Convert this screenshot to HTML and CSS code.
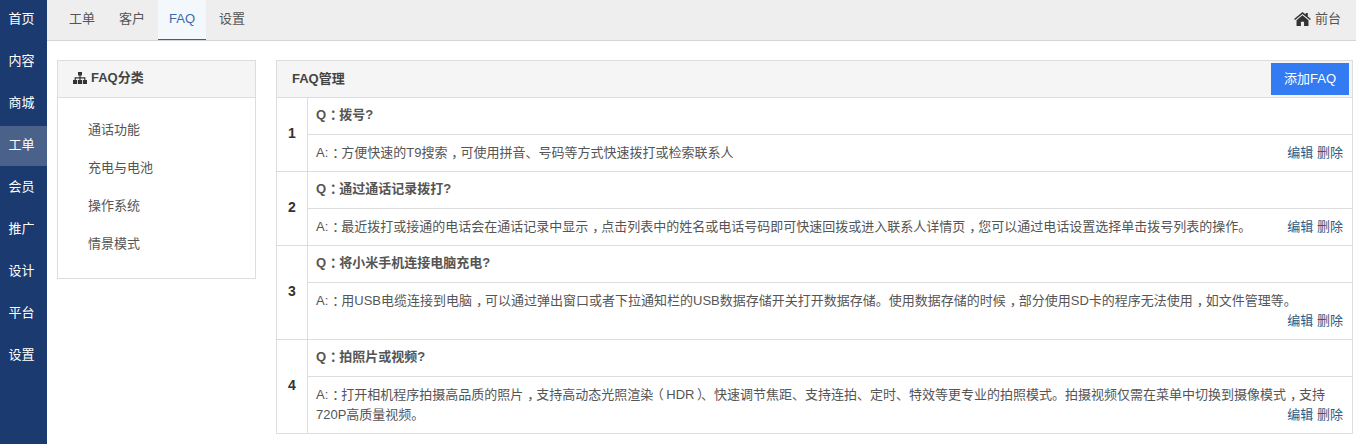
FILE: index.html
```html
<!DOCTYPE html>
<html lang="zh-CN">
<head>
<meta charset="utf-8">
<title>FAQ管理</title>
<link rel="stylesheet" href="styles.css">
</head>
<body>
<div class="app">
  <nav class="side">
    <a class="side-item">首页</a>
    <a class="side-item">内容</a>
    <a class="side-item">商城</a>
    <a class="side-item active">工单</a>
    <a class="side-item">会员</a>
    <a class="side-item">推广</a>
    <a class="side-item">设计</a>
    <a class="side-item">平台</a>
    <a class="side-item">设置</a>
  </nav>
  <div class="main">
    <header class="top">
      <div class="tabs">
        <a class="tab">工单</a>
        <a class="tab">客户</a>
        <a class="tab current">FAQ</a>
        <a class="tab">设置</a>
      </div>
      <a class="front">
        <svg class="home" viewBox="0 0 18 15" width="17" height="14"><path d="M9 0 L12.4 2.8 V1 H14.7 V4.7 L18 7.5 L17 8.7 L9 2.1 L1 8.7 L0 7.5 Z M2.6 8.8 L9 3.5 L15.4 8.8 V15 H10.7 V10.4 H7.3 V15 H2.6 Z" fill="#333"/></svg>
        前台
      </a>
    </header>
    <div class="content">
      <aside class="panel cats">
        <div class="panel-head cats-head">
          <svg class="tree" viewBox="0 0 14 12" width="14" height="12"><path d="M5 0 H9 V3.4 H7.6 V5.2 H12.4 V8 H14 V12 H9.8 V8 H11.2 V6.4 H7.6 V8 H9 V12 H5 V8 H6.4 V6.4 H2.8 V8 H4.2 V12 H0 V8 H1.6 V5.2 H6.4 V3.4 H5 Z" fill="#333"/></svg>
          <span>FAQ分类</span>
        </div>
        <ul class="cat-list">
          <li>通话功能</li>
          <li>充电与电池</li>
          <li>操作系统</li>
          <li>情景模式</li>
        </ul>
      </aside>
      <section class="panel faq">
        <div class="panel-head faq-head">
          <span>FAQ管理</span>
          <button class="add">添加FAQ</button>
        </div>
        <div class="row">
          <div class="num">1</div>
          <div class="qa">
            <div class="q">Q<span class="p">：</span>拨号?</div>
            <div class="a">A:<span class="p">：</span>方便快速的T9搜索<span class="p">，</span>可使用拼音、号码等方式快速拨打或检索联系人<span class="ops"><a>编辑</a> <a>删除</a></span></div>
          </div>
        </div>
        <div class="row">
          <div class="num">2</div>
          <div class="qa">
            <div class="q">Q<span class="p">：</span>通过通话记录拨打?</div>
            <div class="a">A:<span class="p">：</span>最近拨打或接通的电话会在通话记录中显示<span class="p">，</span>点击列表中的姓名或电话号码即可快速回拨或进入联系人详情页<span class="p">，</span>您可以通过电话设置选择单击拨号列表的操作。<span class="ops"><a>编辑</a> <a>删除</a></span></div>
          </div>
        </div>
        <div class="row">
          <div class="num">3</div>
          <div class="qa">
            <div class="q">Q<span class="p">：</span>将小米手机连接电脑充电?</div>
            <div class="a">A:<span class="p">：</span>用USB电缆连接到电脑<span class="p">，</span>可以通过弹出窗口或者下拉通知栏的USB数据存储开关打开数据存储。使用数据存储的时候<span class="p">，</span>部分使用SD卡的程序无法使用<span class="p">，</span>如文件管理等。<span class="ops"><a>编辑</a> <a>删除</a></span></div>
          </div>
        </div>
        <div class="row">
          <div class="num">4</div>
          <div class="qa">
            <div class="q">Q<span class="p">：</span>拍照片或视频?</div>
            <div class="a">A:<span class="p">：</span>打开相机程序拍摄高品质的照片<span class="p">，</span>支持高动态光照渲<span class="tight">染</span><span class="po">（</span>HDR<span class="pc">）</span>、快速调节焦距、支持连拍、定时、特效等更专业的拍照模式。拍摄视频仅需在菜单中切换到摄像模式<span class="p">，</span>支持<span class="line">720P高质量视频。</span><span class="ops"><a>编辑</a> <a>删除</a></span></div>
          </div>
        </div>
      </section>
    </div>
  </div>
</div>
</body>
</html>
```
FILE: styles.css
```css
* { box-sizing: border-box; }
html, body { margin: 0; padding: 0; height: 100%; background: #fff; overflow: hidden; }
body { font: 13px/20px "Liberation Sans", "Noto Sans CJK SC", sans-serif; color: #555; }
.app { display: flex; height: 444px; }
.side { width: 47px; flex: none; background: #1b3a6f; }
.side-item { display: block; height: 42px; line-height: 38px; padding-right: 4px; text-align: center; color: #fff; }
.side-item.active { height: 40px; margin-bottom: 2px; background: #4a6189; }
.main { flex: 1; min-width: 0; }
.top { height: 41px; display: flex; justify-content: space-between; background: #eee; border-bottom: 1px solid #d5d5d5; padding: 0 15px 0 10px; }
.tabs { display: flex; }
.tab { height: 40px; line-height: 38px; padding: 0 12px; color: #555; }
.tab.current { width: 48px; padding: 0; margin: 0 1px; text-align: center; background: #f3f8fd; color: #3d6aa8; border-bottom: 1px solid #2f63a0; }
.front { display: flex; align-items: center; gap: 4px; padding-bottom: 2px; color: #555; }
.home { flex: none; }
.content { display: flex; align-items: flex-start; gap: 20px; padding: 19px 3px 0 10px; }
.panel { border: 1px solid #ddd; background: #fff; }
.cats { width: 199px; flex: none; height: 219px; }
.faq { flex: 1; min-width: 0; }
.panel-head { height: 37px; display: flex; align-items: center; background: #f5f5f5; font-weight: bold; color: #444; border-bottom: 1px solid #ddd; padding-left: 15px; gap: 4px; }
.cats-head { padding-bottom: 2px; }
.faq-head { justify-content: space-between; padding: 0 3px 0 15px; }
.add { width: 78px; height: 32px; border: 0; border-radius: 0; background: #337bf2; color: #fff; font: inherit; font-weight: normal; font-size: 13px; padding: 0; }
.cat-list { list-style: none; margin: 0; padding: 13px 0 0 30px; }
.cat-list li { height: 38px; line-height: 38px; }
.row { display: flex; border-bottom: 1px solid #ddd; }
.row:last-child { border-bottom: 0; }
.num { width: 31px; flex: none; display: flex; align-items: center; justify-content: center; padding-bottom: 4px; border-right: 1px solid #ddd; color: #333; font-weight: bold; font-size: 14px; }
.qa { flex: 1; min-width: 0; }
.q { padding: 7px 8px 8px; height: 37px; font-weight: bold; color: #555; border-bottom: 1px solid #ddd; }
.a { padding: 8px 9px 8px 8px; }
.a::after { content: ""; display: block; clear: both; }
.p { padding-left: .3em; letter-spacing: -.3em; }
.tight { letter-spacing: -.2em; }
.po { padding-right: .2em; }
.pc { padding-left: .2em; letter-spacing: -.2em; }
.line { display: inline-block; }
.ops { float: right; }
.ops a { color: #2f5a85; }
```
